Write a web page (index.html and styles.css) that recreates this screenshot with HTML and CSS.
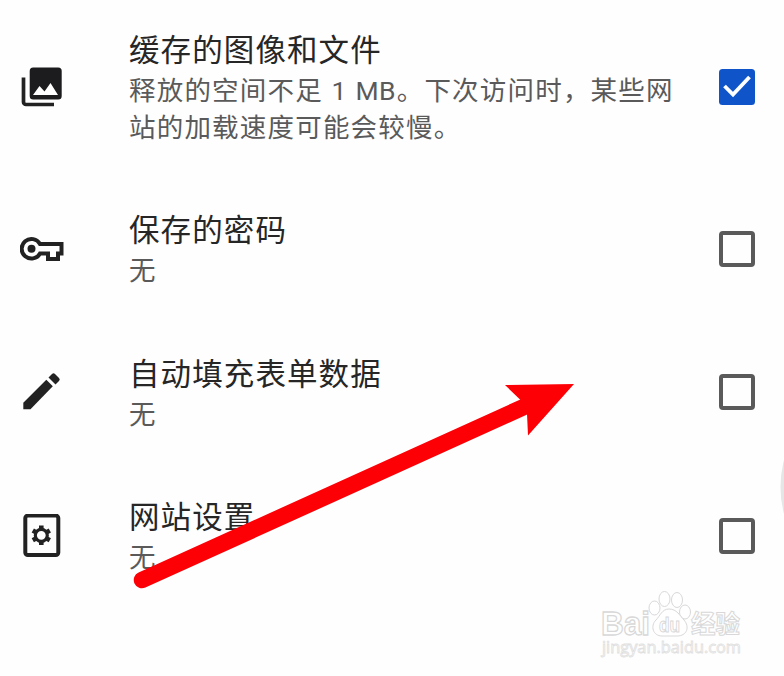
FILE: index.html
```html
<!DOCTYPE html>
<html lang="zh-CN">
<head>
    <meta charset="UTF-8">
    <meta name="viewport" content="width=device-width, initial-scale=1.0">
    <title>清除浏览数据</title>
    <link rel="stylesheet" href="styles.css">
</head>
<body>
    <div class="lista">
        <div class="fila">
            <svg class="icono" viewBox="0 0 44 44">
                <path d="M3.500 12.500v24.500a2.500 2.500 0 0 0 2.500 2.500h28" fill="none" stroke="#222" stroke-width="3.700"/>
                <rect x="9.700" y="2.500" width="32" height="32" rx="3.500" fill="#1c1c1e"/>
                <path d="M13 30l6.500-9 5 5.500 6-8.500L38 30z" fill="#fff"/>
            </svg>
            <div class="texto">
                <div class="titulo">缓存的图像和文件</div>
                <div class="detalle">释放的空间不足<span class="unidad"> 1 MB</span>。下次访问时，某些网<br>站的加载速度可能会较慢。</div>
            </div>
            <svg class="casilla" viewBox="0 0 36 36">
                <rect width="36" height="36" rx="3.500" fill="#0f55c9"/>
                <path d="M5.500 17l8.500 8.500L30.500 8" fill="none" stroke="#fff" stroke-width="3.800"/>
            </svg>
        </div>
        <div class="fila">
            <svg class="icono" viewBox="0 0 44 44">
                <path d="M20 17h21.500v9.500H38V32H28v-5.500h-8A9.800 9.800 0 1 1 20 17z" fill="#fff" stroke="#222" stroke-width="4"/>
                <circle cx="11.500" cy="21.800" r="4" fill="#222"/>
            </svg>
            <div class="texto">
                <div class="titulo">保存的密码</div>
                <div class="detalle">无</div>
            </div>
            <span class="casilla vacia"></span>
        </div>
        <div class="fila">
            <svg class="icono" viewBox="0 0 44 44">
                <path d="M3.300 39.200v-6.500L26.300 9.700l6.500 6.500L10.500 39.200z" fill="#222"/>
                <path d="M28.500 7.500l3.500-3.500q1.500-1.500 3 0l4 4q1.500 1.500 0 3L35.500 14.500z" fill="#222"/>
            </svg>
            <div class="texto">
                <div class="titulo">自动填充表单数据</div>
                <div class="detalle">无</div>
            </div>
            <span class="casilla vacia"></span>
        </div>
        <div class="fila">
            <svg class="icono" viewBox="0 0 44 44">
                <rect x="5.300" y="1.600" width="33" height="39.500" rx="2.500" fill="none" stroke="#222" stroke-width="4"/>
                <circle cx="21.300" cy="21.300" r="6" fill="none" stroke="#222" stroke-width="3.200"/>
                <path d="M21.300 11.500v4M21.300 27.100v4M12.800 16.400l3.500 2M26.300 24.200l3.500 2M12.800 26.200l3.500-2M26.300 18.400l3.500-2" stroke="#222" stroke-width="4.600"/>
            </svg>
            <div class="texto">
                <div class="titulo">网站设置</div>
                <div class="detalle">无</div>
            </div>
            <span class="casilla vacia"></span>
        </div>
    </div>

    <svg class="burbuja" viewBox="0 0 4 92">
        <ellipse cx="34" cy="46" rx="33.500" ry="60"/>
    </svg>

    <svg class="flecha" viewBox="0 0 784 676">
        <path d="M142 580L526 406" stroke="#fd0006" stroke-width="16.500" stroke-linecap="round"/>
        <path d="M574 384L505 385L520 399.500L527 414L528 435.500z" fill="#fd0006"/>
    </svg>

    <svg class="marca" viewBox="0 0 160 80">
        <g class="contorno">
            <text class="logo" x="1" y="45" textLength="49" lengthAdjust="spacingAndGlyphs">Bai</text>
            <ellipse cx="54.500" cy="18" rx="5.500" ry="7"/>
            <ellipse cx="64.500" cy="9" rx="5.500" ry="7.500"/>
            <ellipse cx="77" cy="10" rx="5.500" ry="7.500"/>
            <ellipse cx="85" cy="22" rx="5.500" ry="7"/>
            <path d="M69 19c-7 0-9 7-13 11-6 6-3 16 6 16h15c10 0 13-9 7-16-4-4-7-11-15-11z"/>
            <text class="du" x="59" y="42" textLength="21" lengthAdjust="spacingAndGlyphs">du</text>
            <text class="jingyan" x="91" y="43" textLength="49" lengthAdjust="spacingAndGlyphs">经验</text>
            <text class="sitio" x="2" y="63" textLength="139" lengthAdjust="spacingAndGlyphs">jingyan.baidu.com</text>
        </g>
    </svg>
</body>
</html>
```
FILE: styles.css
```css
body {
    font-family: Roboto, "Noto Sans CJK SC", sans-serif;
    margin: 0;
    background-color: #fefefe;
    position: relative;
    height: 676px;
    overflow: hidden;
}

.lista {
    display: flex;
    flex-direction: column;
    gap: 62px;
    padding: 28px 29px 0 20px;
}

.fila {
    display: grid;
    grid-template-columns: 44px 1fr 36px;
    align-items: center;
}

.icono {
    width: 44px;
    height: 44px;
}

.texto {
    padding-left: 65px;
    white-space: nowrap;
}

.titulo {
    font-size: 30.5px;
    line-height: 45px;
    letter-spacing: 1.1px;
    color: #262626;
}

.detalle {
    font-size: 26.5px;
    line-height: 36.5px;
    letter-spacing: 1.2px;
    color: #5a5a5a;
}

.unidad {
    letter-spacing: 0.3px;
    word-spacing: 1.8px;
    margin-right: 1px;
}

.casilla {
    width: 36px;
    height: 36px;
    box-sizing: border-box;
}

.vacia {
    border: 4px solid #5a5a5a;
    border-radius: 4px;
}

.burbuja {
    position: absolute;
    right: 0;
    top: 441px;
    width: 4px;
    height: 92px;
    fill: #e6e6e6;
}

.flecha {
    position: absolute;
    left: 0;
    top: 0;
    width: 784px;
    height: 676px;
}

.marca {
    position: absolute;
    left: 600px;
    top: 590px;
    width: 160px;
    height: 80px;
}

.contorno {
    fill: #fff;
    stroke: #d8d8d8;
    stroke-width: 1;
}

.logo {
    font: bold 34px "Liberation Sans", sans-serif;
    stroke-width: 1.3;
}

.du {
    font: bold 20px "Liberation Sans", sans-serif;
}

.jingyan {
    font: bold 25px "Noto Sans CJK SC", sans-serif;
}

.sitio {
    font: 16px "Open Sans", sans-serif;
    stroke: #e0e0e0;
    stroke-width: 0.8;
}
```
